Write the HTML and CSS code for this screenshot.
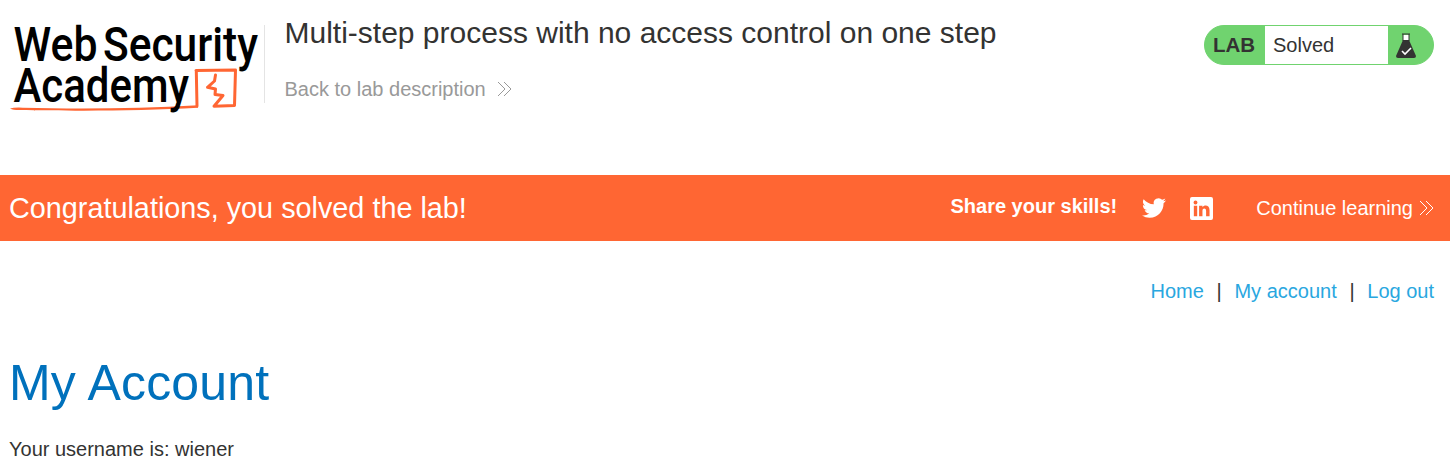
FILE: index.html
```html
<!DOCTYPE html>
<html lang="en">
<head>
<meta charset="utf-8">
<title>Multi-step process with no access control on one step</title>
<link rel="stylesheet" href="styles.css">
</head>
<body>
<header class="lab-header">
  <svg class="logo" viewBox="0 0 256 100" role="img" aria-label="Web Security Academy">
    <path d="M1 98.500Q5 97.300 14 97.700C70 99.200 130 98.600 189 95.300L189 97.800C130 101.300 60 101 10 100Q4 100 1 98.500z" fill="#ff6633"/>
    <path d="M188 96L187.300 61M187 60.500L226.500 60L225.500 95.500L205 96.300L214 85.500L206 84.500L206.500 79L198.500 77.300L205.500 71L206.500 65" fill="none" stroke="#ff6633" stroke-width="3" stroke-linecap="round" stroke-linejoin="round"/>
    <g class="logo-text">
      <text x="4.500" y="51" textLength="84" lengthAdjust="spacingAndGlyphs">Web</text>
      <text x="94" y="51" textLength="155" lengthAdjust="spacingAndGlyphs">Security</text>
      <text x="4.500" y="92" textLength="175.500" lengthAdjust="spacingAndGlyphs">Academy</text>
    </g>
  </svg>
  <div class="title">
    <h2>Multi-step process with no access control on one step</h2>
    <a class="back" href="#">Back to lab description
      <svg class="chevrons" viewBox="0 0 15 16"><path d="M1 1l7 7-7 7M7 1l7 7-7 7"/></svg>
    </a>
  </div>
  <div class="status">
    <span class="status-tag">LAB</span>
    <span class="status-text">Solved</span>
    <svg class="flask" viewBox="0 0 20 26">
      <path d="M7 2h6v7H7z" fill="#fff"/>
      <path d="M6 1h8M7 1v7M13 1v7" fill="none" stroke="#333332" stroke-width="1"/>
      <path d="M7 7h6l7 16q0 2-2 2H2q-2 0-2-2z" fill="#333332"/>
      <path d="M6 18l3 3 6-6" fill="none" stroke="#fff" stroke-width="1.600"/>
    </svg>
  </div>
</header>
<section class="banner">
  <h4>Congratulations, you solved the lab!</h4>
  <span class="share">Share your skills!</span>
  <svg class="twitter" viewBox="0 0 24 24"><path d="M23.950 4.570a10 10 0 0 1-2.820.77 4.960 4.960 0 0 0 2.160-2.720c-.95.550-2 .95-3.130 1.180a4.920 4.920 0 0 0-8.380 4.480C7.690 8.090 4.070 6.130 1.640 3.160a4.820 4.820 0 0 0-.67 2.480c0 1.710.87 3.210 2.190 4.100a4.900 4.900 0 0 1-2.230-.62v.06a4.920 4.920 0 0 0 3.950 4.830 5 5 0 0 1-2.210.08 4.940 4.940 0 0 0 4.600 3.420A9.870 9.870 0 0 1 0 19.540a14 14 0 0 0 7.550 2.210c9.050 0 14-7.500 14-13.990 0-.21 0-.42-.02-.63a9.940 9.940 0 0 0 2.460-2.550z"/></svg>
  <svg class="linkedin" viewBox="0 0 24 24"><path fill-rule="evenodd" d="M2 0h20q2 0 2 2v20q0 2-2 2H2q-2 0-2-2V2q0-2 2-2zM4 9h3.500v11H4zM5.750 3.600a2 2 0 1 0 0 4.100 2 2 0 0 0 0-4.100zM9.500 9v11H13v-5.600c0-3.300 3.800-3.200 3.800 0V20h3.600v-6.300c0-5.500-5.700-5.800-7.400-2.900V9z"/></svg>
  <a class="continue" href="#">Continue learning
    <svg class="chevrons" viewBox="0 0 15 16"><path d="M1 1l7 7-7 7M7 1l7 7-7 7"/></svg>
  </a>
</section>
<main>
  <nav class="links">
    <a href="#">Home</a><span>|</span><a href="#">My account</a><span>|</span><a href="#">Log out</a>
  </nav>
  <h1>My Account</h1>
  <p>Your username is: wiener</p>
</main>
</body>
</html>
```
FILE: styles.css
```css
* { box-sizing: border-box; }
body {
  margin: 0;
  height: 469px;
  overflow: hidden;
  background: #fff;
  color: #333332;
  font: 20px/24px "Liberation Sans", Arial, sans-serif;
}
h1, h2, h4, p { margin: 0; font-weight: 400; }
a { text-decoration: none; color: #29a7df; }
svg { display: block; flex: none; }

.lab-header {
  display: flex;
  align-items: flex-start;
  height: 175px;
  padding: 0 16px 0 9px;
}
.logo { width: 256px; height: 100px; margin-top: 10px; overflow: visible; }
.logo-text { font: 500 48px Roboto, sans-serif; fill: #000; }
.title {
  flex: 1;
  height: 78px;
  margin-top: 25px;
  margin-left: -1px;
  padding-left: 19.500px;
  border-left: 1px solid #e4e4e4;
}
.title h2 { margin-top: -10px; font-size: 30px; line-height: 36px; white-space: nowrap; }
.back { display: flex; align-items: center; gap: 11px; margin-top: 26px; color: #999; }
.chevrons { width: 15px; height: 16px; fill: none; stroke: currentColor; stroke-width: 1; }

.status {
  display: flex;
  align-items: center;
  width: 230px;
  height: 40px;
  margin-top: 25px;
  border: 1px solid #70d36f;
  border-radius: 20px;
  background: #70d36f;
}
.status-tag { width: 60px; padding-left: 8px; font-weight: 700; font-size: 20.500px; }
.status-text { width: 123px; height: 38px; padding-left: 8px; background: #fff; line-height: 38px; }
.flask { width: 20px; height: 26px; margin-left: 8px; margin-top: 2px; }

.banner {
  display: flex;
  align-items: center;
  height: 66px;
  padding: 0 16px 0 9px;
  background: #ff6633;
  color: #fff;
}
.banner h4 { flex: 1; font-size: 28.800px; line-height: 36px; }
.banner svg { fill: #fff; }
.banner .chevrons { fill: none; }
.share { margin-top: -5px; font-weight: 700; }
.twitter { width: 24px; height: 24px; margin-left: 25px; }
.linkedin { width: 23px; height: 23px; margin-left: 24px; }
.continue { display: flex; align-items: center; gap: 6px; margin-left: 43px; color: #fff; }

main { padding: 0 16px 0 9px; }
.links { display: flex; justify-content: flex-end; gap: 12.700px; padding-top: 38px; }
h1 { margin-top: 50px; font-size: 50px; line-height: 60px; letter-spacing: 0.200px; color: #0071bc; }
p { margin-top: 24px; }
```
